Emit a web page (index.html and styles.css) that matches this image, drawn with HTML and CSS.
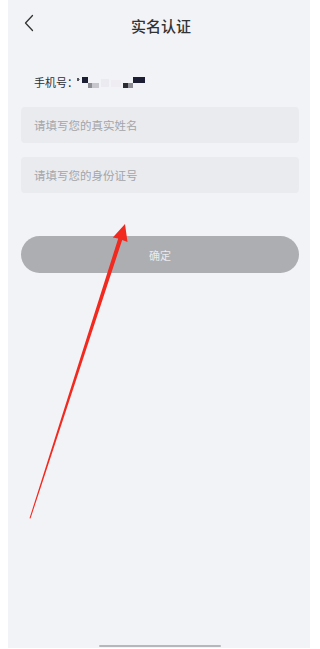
FILE: index.html
```html
<!DOCTYPE html>
<html lang="zh-CN">
<head>
<meta charset="utf-8">
<title>实名认证</title>
<link rel="stylesheet" href="styles.css">
</head>
<body>
<div class="page">
  <header class="nav">
    <svg class="back" width="10" height="18" viewBox="0 0 10 18"><path d="M8.5 1.5 L1.5 9 L8.5 16.5" fill="none" stroke="#333" stroke-width="1.3" stroke-linecap="round" stroke-linejoin="round"/></svg>
    <h1 class="title">实名认证</h1>
  </header>
  <main class="form">
    <div class="phone">
      <span class="phone-label">手机号：</span>
      <svg class="mask" width="72" height="12" viewBox="0 0 72 12">
        <rect x="0" y="1" width="2" height="3" fill="#55565e"/>
        <rect x="2" y="2" width="1" height="1" fill="#9a9ba3"/>
        <rect x="5" y="0" width="6" height="6" fill="#1c1e34"/>
        <rect x="11" y="6" width="4" height="5" fill="#8c8d94"/>
        <rect x="15" y="6" width="7" height="5" fill="#c6c6cc"/>
        <rect x="24" y="2" width="8" height="8" fill="#ebeaf1"/>
        <rect x="34" y="3" width="10" height="7" fill="#efecf2"/>
        <rect x="46" y="6" width="5" height="5" fill="#2b2c33"/>
        <rect x="51" y="6" width="5" height="5" fill="#8d8e95"/>
        <rect x="56" y="0" width="12" height="6" fill="#1c1e34"/>
      </svg>
    </div>
    <input class="field" type="text" placeholder="请填写您的真实姓名">
    <input class="field" type="text" placeholder="请填写您的身份证号">
    <button class="submit" type="button">确定</button>
  </main>
  <div class="home-bar"></div>
  <svg class="annotation" width="310" height="649" viewBox="0 0 310 649">
    <polygon points="125,224 127.5,242 122.2,240 30.5,518.5 29.5,518.3 118.2,238.6 112.8,237.4" fill="#f2291f"/>
  </svg>
</div>
</body>
</html>
```
FILE: styles.css
```css
html, body {
  margin: 0;
  padding: 0;
  background: #ffffff;
  overflow: hidden;
  width: 310px;
  height: 649px;
}

body {
  font-family: "Noto Sans CJK SC", "Noto Sans", sans-serif;
}

.page {
  position: relative;
  margin-left: 8px;
  width: 304px;
  height: 648px;
  background: #f2f3f7;
  display: flex;
  flex-direction: column;
}

.nav {
  position: relative;
  height: 52px;
  display: flex;
  align-items: center;
  justify-content: center;
}

.back {
  position: absolute;
  left: 16px;
  top: 14px;
}

.title {
  margin: 0;
  font-size: 15px;
  font-weight: 500;
  color: #333333;
  letter-spacing: 0;
  line-height: 20px;
  transform: translateX(1px);
}

.form {
  padding: 0 13px;
  display: flex;
  flex-direction: column;
}

.phone {
  margin-top: 22px;
  height: 16px;
  padding-left: 13px;
  display: flex;
  align-items: center;
}

.phone-label {
  font-size: 11px;
  line-height: 16px;
  color: #2e2f33;
}

.mask {
  margin-left: -1px;
  margin-top: 2px;
}

.field {
  box-sizing: border-box;
  margin: 17px 0 0;
  height: 36px;
  width: 100%;
  border: none;
  outline: none;
  border-radius: 4px;
  background: #eaebef;
  padding: 0 13px;
  font-family: inherit;
  font-size: 11.5px;
  color: #333;
}

.field + .field {
  margin-top: 14px;
}

.field::placeholder {
  color: #a4a5a9;
}

.submit {
  margin-top: 43px;
  height: 37px;
  width: 100%;
  border: none;
  border-radius: 19px;
  background: #adaeb2;
  color: #e9eaee;
  font-family: inherit;
  font-size: 11px;
  padding: 0;
}

.home-bar {
  margin: auto 0 1px 91px;
  width: 122px;
  height: 2.5px;
  border-radius: 2px;
  background: #b6b7bb;
}

.annotation {
  position: absolute;
  left: -8px;
  top: 0;
  pointer-events: none;
}
```
